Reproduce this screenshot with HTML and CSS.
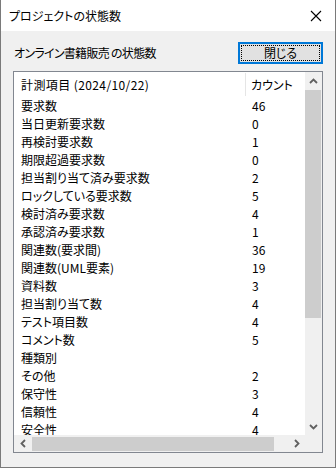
FILE: index.html
```html
<!DOCTYPE html>
<html lang="ja">
<head>
    <meta charset="UTF-8">
    <title>プロジェクトの状態数</title>
    <link rel="stylesheet" href="styles.css">
</head>
<body>
    <div class="window">
        <div class="titlebar">
            <span class="title">プロジェクトの状態数</span>
            <span class="close">
                <svg width="12" height="12" viewBox="0 0 12 12"><path d="M1 1L11 11M11 1L1 11" stroke="#000" stroke-width="1.1" fill="none"/></svg>
            </span>
        </div>
        <div class="content">
            <div class="top-row">
                <span class="label">オンライン書籍販売 の状態数</span>
                <button class="btn-close"><span class="focus">閉じる</span></button>
            </div>
            <div class="listbox">
                <div class="list-main">
                    <div class="list-view">
                        <div class="list-header">
                            <div class="col-name head-name">計測項目 (2024/10/22)</div>
                            <div class="col-count">カウント</div>
                        </div>
                        <div class="row"><div class="col-name">要求数</div><div class="col-count">46</div></div>
                        <div class="row"><div class="col-name">当日更新要求数</div><div class="col-count">0</div></div>
                        <div class="row"><div class="col-name">再検討要求数</div><div class="col-count">1</div></div>
                        <div class="row"><div class="col-name">期限超過要求数</div><div class="col-count">0</div></div>
                        <div class="row"><div class="col-name">担当割り当て済み要求数</div><div class="col-count">2</div></div>
                        <div class="row"><div class="col-name">ロックしている要求数</div><div class="col-count">5</div></div>
                        <div class="row"><div class="col-name">検討済み要求数</div><div class="col-count">4</div></div>
                        <div class="row"><div class="col-name">承認済み要求数</div><div class="col-count">1</div></div>
                        <div class="row"><div class="col-name">関連数(要求間)</div><div class="col-count">36</div></div>
                        <div class="row"><div class="col-name">関連数(UML要素)</div><div class="col-count">19</div></div>
                        <div class="row"><div class="col-name">資料数</div><div class="col-count">3</div></div>
                        <div class="row"><div class="col-name">担当割り当て数</div><div class="col-count">4</div></div>
                        <div class="row"><div class="col-name">テスト項目数</div><div class="col-count">4</div></div>
                        <div class="row"><div class="col-name">コメント数</div><div class="col-count">5</div></div>
                        <div class="row"><div class="col-name">種類別</div><div class="col-count"></div></div>
                        <div class="row"><div class="col-name">その他</div><div class="col-count">2</div></div>
                        <div class="row"><div class="col-name">保守性</div><div class="col-count">3</div></div>
                        <div class="row"><div class="col-name">信頼性</div><div class="col-count">4</div></div>
                        <div class="row"><div class="col-name">安全性</div><div class="col-count">4</div></div>
                    </div>
                    <div class="vscroll">
                        <div class="arrow">
                            <svg width="9" height="6" viewBox="0 0 9 6"><path d="M1 5L4.5 1.5L8 5" stroke="#606060" stroke-width="1.8" fill="none"/></svg>
                        </div>
                        <div class="vtrack"><div class="vthumb"></div></div>
                        <div class="arrow">
                            <svg width="9" height="6" viewBox="0 0 9 6"><path d="M1 1L4.5 4.5L8 1" stroke="#606060" stroke-width="1.8" fill="none"/></svg>
                        </div>
                    </div>
                </div>
                <div class="hscroll-row">
                    <div class="hscroll">
                        <div class="arrow">
                            <svg width="6" height="9" viewBox="0 0 6 9"><path d="M5 1L1.5 4.5L5 8" stroke="#606060" stroke-width="1.8" fill="none"/></svg>
                        </div>
                        <div class="htrack"><div class="hthumb"></div></div>
                        <div class="arrow">
                            <svg width="6" height="9" viewBox="0 0 6 9"><path d="M1 1L4.5 4.5L1 8" stroke="#606060" stroke-width="1.8" fill="none"/></svg>
                        </div>
                    </div>
                    <div class="corner"></div>
                </div>
            </div>
        </div>
    </div>
</body>
</html>
```
FILE: styles.css
```css
html, body {
    margin: 0;
    padding: 0;
}
body {
    font-family: "Noto Sans CJK JP", "Noto Sans", sans-serif;
    font-size: 12px;
    color: #000;
    background: #f0f0f0;
    font-feature-settings: "palt";
}
.window {
    width: 336px;
    height: 468px;
    box-sizing: border-box;
    border: 1px solid #7a7a7a;
    border-top: none;
    background: #f0f0f0;
    display: flex;
    flex-direction: column;
}
.titlebar {
    height: 31px;
    background: #fff;
    display: flex;
    align-items: center;
    justify-content: space-between;
    padding: 0 13px 0 8px;
    flex-shrink: 0;
}
.title {
    line-height: 16px;
}
.close {
    display: flex;
    align-items: center;
}
.content {
    flex: 1;
    display: flex;
    flex-direction: column;
    padding: 11px 12px 14px 12px;
    min-height: 0;
}
.top-row {
    display: flex;
    justify-content: space-between;
    align-items: center;
    height: 22px;
}
.label {
    line-height: 16px;
    padding-left: 1px;
    letter-spacing: -0.7px;
}
.btn-close {
    width: 85px;
    height: 22px;
    margin: 0;
    padding: 1px;
    box-sizing: border-box;
    background: #e1e1e1;
    border: 2px solid #0078d7;
    font: inherit;
    color: #000;
    display: flex;
}
.focus {
    flex: 1;
    border: 1px dotted #000;
    display: flex;
    align-items: center;
    justify-content: center;
    line-height: 14px;
}
.listbox {
    margin-top: 7px;
    flex: 1;
    border: 1px solid #828790;
    background: #fff;
    display: flex;
    flex-direction: column;
    min-height: 0;
}
.list-main {
    flex: 1;
    display: flex;
    min-height: 0;
}
.list-view {
    flex: 1;
    overflow: hidden;
}
.list-header {
    height: 25px;
    display: grid;
    grid-template-columns: 231px 1fr;
    align-items: center;
}
.head-name {
    letter-spacing: 0.4px;
}
.list-header .col-count {
    border-left: 1px solid #e5e5e5;
    height: 23px;
    display: flex;
    align-items: center;
    padding-left: 5px;
}
.row {
    height: 18px;
    display: grid;
    grid-template-columns: 231px 1fr;
    align-items: center;
    line-height: 16px;
}
.col-name {
    padding-left: 7px;
    white-space: nowrap;
}
.row .col-count {
    padding-left: 7px;
}
.vscroll {
    width: 17px;
    background: #f0f0f0;
    display: flex;
    flex-direction: column;
}
.arrow {
    width: 17px;
    height: 17px;
    display: flex;
    align-items: center;
    justify-content: center;
    flex-shrink: 0;
}
.vtrack {
    flex: 1;
    padding-top: 1px;
}
.vthumb {
    height: 228px;
    margin: 0 1px 0 0;
    background: #cdcdcd;
}
.hscroll-row {
    height: 17px;
    display: flex;
}
.hscroll {
    flex: 1;
    display: flex;
    background: #f0f0f0;
}
.htrack {
    flex: 1;
    padding: 2px 0 1px 1px;
}
.hthumb {
    width: 242px;
    height: 14px;
    background: #cdcdcd;
}
.corner {
    width: 17px;
    background: #f0f0f0;
}
```
